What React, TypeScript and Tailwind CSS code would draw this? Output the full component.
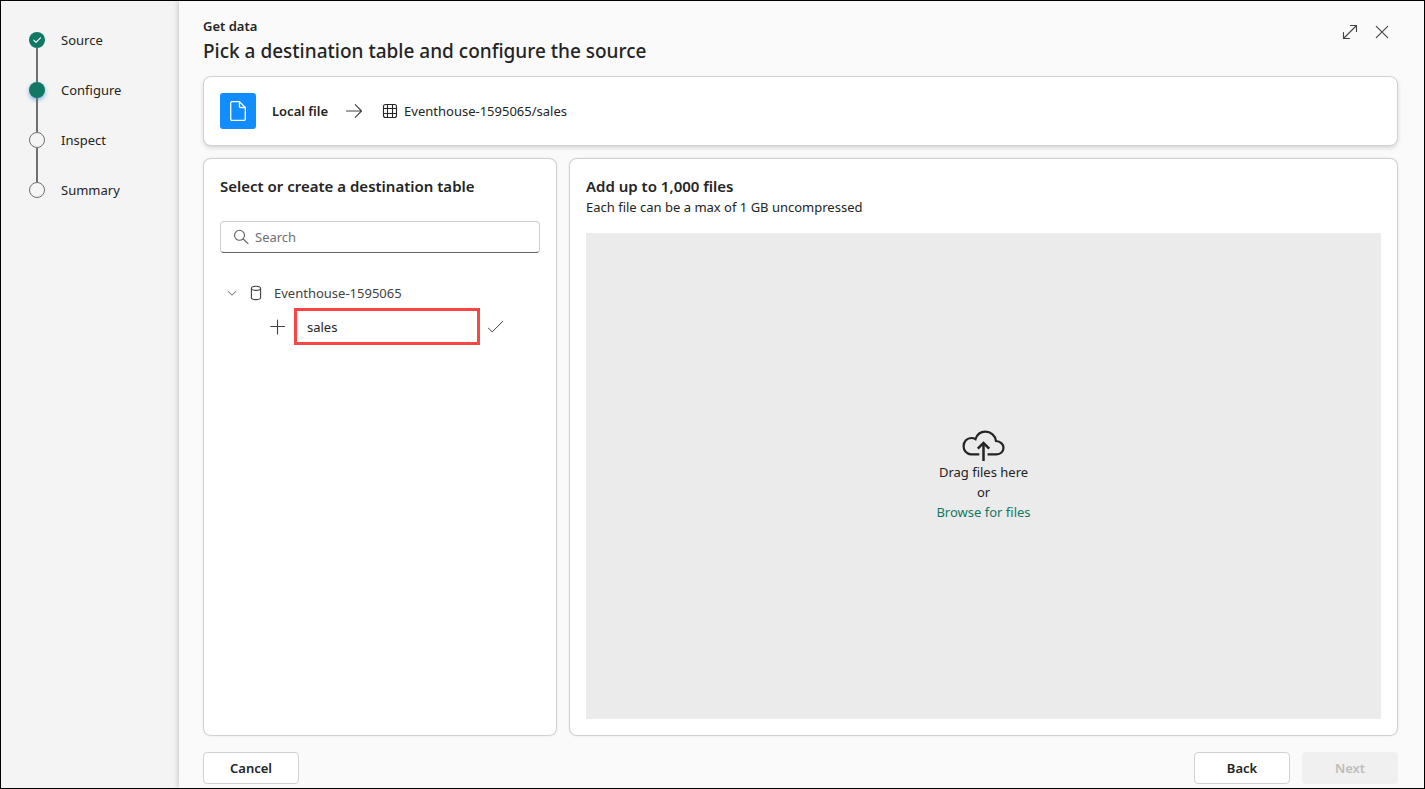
import React, { useState } from "react";

type StepState = "done" | "current" | "todo";

const steps: { label: string; state: StepState }[] = [
  { label: "Source", state: "done" },
  { label: "Configure", state: "current" },
  { label: "Inspect", state: "todo" },
  { label: "Summary", state: "todo" },
];

function StepMarker({ state }: { state: StepState }) {
  if (state === "done") {
    return (
      <span className="flex size-4 items-center justify-center rounded-full bg-[#117865]">
        <svg viewBox="0 0 16 16" className="size-4" fill="none" stroke="#fff" strokeWidth="1.1" strokeLinecap="round" strokeLinejoin="round" aria-hidden="true">
          <path d="M4.7 8.2 7 10.4 11.5 5.8" />
        </svg>
      </span>
    );
  }
  if (state === "current") {
    return <span className="size-4 rounded-full bg-[#117865] shadow-[0_2px_4px_#0078d480]" />;
  }
  return <span className="size-4 rounded-full border border-[#707070] bg-[#f5f5f5]" />;
}

function Stepper() {
  return (
    <nav aria-label="Steps" className="w-[178px] shrink-0 bg-[#f4f4f4] pl-7 pt-[31px]">
      <ol>
        {steps.map((step, i) => (
          <li key={step.label} className="flex gap-4">
            <div className="flex w-4 flex-col items-center">
              <StepMarker state={step.state} />
              {i < steps.length - 1 && <span className="h-[34px] w-[2px] bg-[#707070]" />}
            </div>
            <span className="h-4 leading-4">{step.label}</span>
          </li>
        ))}
      </ol>
    </nav>
  );
}

function SourceSummary({ table }: { table: string }) {
  return (
    <section className="flex h-[70px] shrink-0 items-center rounded-lg border border-[#d1d1d1] bg-white px-4 shadow-[0_2px_4px_#00000024]">
      <span className="flex size-9 items-center justify-center rounded-[3px] bg-[#118dff]">
        <svg viewBox="0 0 20 24" className="h-6 w-5" fill="none" stroke="#fff" strokeWidth="1.3" strokeLinejoin="round" aria-hidden="true">
          <path d="M3.7 2.6H11.4L17.3 8.5V20a1.4 1.4 0 0 1-1.4 1.4H4.1A1.4 1.4 0 0 1 2.7 20V3.9a1.3 1.3 0 0 1 1.3-1.3Z" />
          <path d="M11.4 2.6V7.2a1.3 1.3 0 0 0 1.3 1.3h4.6" />
        </svg>
      </span>
      <span className="ml-4 font-semibold">Local file</span>
      <svg viewBox="0 0 20 20" className="ml-4 size-5" fill="none" stroke="#424242" strokeWidth="1.1" strokeLinecap="round" strokeLinejoin="round" aria-hidden="true">
        <path d="M2.5 10H17.4M11.3 3.6 17.5 10 11.3 16.4" />
      </svg>
      <svg viewBox="0 0 16 16" className="ml-[18px] size-4" fill="none" stroke="#242424" strokeWidth="1.1" aria-hidden="true">
        <rect x="1.5" y="1.5" width="13" height="13" rx="2" />
        <path d="M1.5 5.5H14.5M1.5 10.5H14.5M5.5 1.5V14.5M10.5 1.5V14.5" />
      </svg>
      <span className="ml-[6px]">Eventhouse-1595065/{table}</span>
    </section>
  );
}

function DestinationPanel({ table, onTable }: { table: string; onTable: (v: string) => void }) {
  return (
    <section className="w-[354px] shrink-0 rounded-lg border border-[#d1d1d1] bg-white p-4 shadow-[0_0_2px_#0000001f]">
      <h2 className="text-[15px] font-semibold leading-[22px]">Select or create a destination table</h2>
      <label className="mt-6 flex h-8 items-center gap-[6px] rounded border border-[#d1d1d1] border-b-[#616161] px-3">
        <svg viewBox="0 0 16 16" className="size-4" fill="none" stroke="#616161" strokeWidth="1.1" strokeLinecap="round" aria-hidden="true">
          <circle cx="6.5" cy="6.3" r="5" />
          <path d="M10.2 10 15 14.7" />
        </svg>
        <input type="search" aria-label="Search" placeholder="Search" className="min-w-0 flex-1 bg-transparent outline-none placeholder:text-[#707070]" />
      </label>
      <div className="mt-6">
        <div className="flex h-[31px] items-center text-[#424242]">
          <button type="button" aria-label="Collapse Eventhouse-1595065" aria-expanded="true" className="flex size-6 items-center justify-center">
            <svg viewBox="0 0 12 12" className="size-3" fill="none" stroke="#616161" strokeWidth="1" strokeLinecap="round" strokeLinejoin="round">
              <path d="M2 4.3 6 8.2 10 4.3" />
            </svg>
          </button>
          <svg viewBox="0 0 16 16" className="ml-1 size-4" fill="none" stroke="#424242" strokeWidth="1.1" aria-hidden="true">
            <ellipse cx="8" cy="3.3" rx="4.6" ry="2.1" />
            <path d="M3.4 3.3V12.4C3.4 13.7 5.4 14.6 8 14.6s4.6-.9 4.6-2.2V3.3" />
          </svg>
          <span className="ml-[10px]">Eventhouse-1595065</span>
        </div>
        <div className="flex items-center gap-2 pl-[50px]">
          <svg viewBox="0 0 16 16" className="size-4" fill="none" stroke="#424242" strokeWidth="1.1" strokeLinecap="round" aria-hidden="true">
            <path d="M7.5 1V15M.7 7.5H14.5" />
          </svg>
          <input
            type="text"
            aria-label="New table name"
            value={table}
            onChange={(e) => onTable(e.target.value)}
            className="h-[37px] w-[186px] border-[3px] border-[#fb4545] bg-white px-[10px] outline-none"
          />
          <button type="button" aria-label="Create table" className="flex size-4 items-center justify-center">
            <svg viewBox="0 0 16 16" className="size-4" fill="none" stroke="#424242" strokeWidth="1" strokeLinecap="round" strokeLinejoin="round">
              <path d="M.1 8.8 4.2 12.9 14.6 2.5" />
            </svg>
          </button>
        </div>
      </div>
    </section>
  );
}

function UploadPanel() {
  return (
    <section className="flex min-w-0 flex-1 flex-col rounded-lg border border-[#d1d1d1] bg-white p-4 shadow-[0_0_2px_#0000001f]">
      <h2 className="text-[15px] font-semibold leading-[22px]">Add up to 1,000 files</h2>
      <p>Each file can be a max of 1 GB uncompressed</p>
      <div className="mt-4 flex flex-1 flex-col items-center justify-center bg-[#ebebeb]">
        <svg viewBox="0 0 44 32" className="h-8 w-11" fill="none" stroke="#242424" strokeWidth="2.2" aria-hidden="true">
          <path d="M17.3 24.3H8.8A7.9 7.9 0 0 1 1.6 16.3C1.6 11.5 5 8 9.3 8c1.6 0 3 .4 4.2 1.2C15.1 4.4 18.9 1.7 23.3 1.7c5.6 0 10.2 4.2 10.7 9.3 4.2.3 7.5 3.1 7.5 6.7 0 3.9-3.1 6.6-6.8 6.6H25.6" />
          <path d="M21.5 31V13" strokeWidth="2.5" />
          <path d="M15.8 18.6 21.5 12.9 27.2 18.6" strokeWidth="2.5" />
        </svg>
        <p>Drag files here</p>
        <p>or</p>
        <a href="#browse" className="text-[#117865]">Browse for files</a>
      </div>
    </section>
  );
}

export default function App() {
  const [table, setTable] = useState("sales");
  return (
    <div className="flex min-h-screen border border-black bg-[#fafafa] font-['Noto_Sans','Open_Sans',sans-serif] text-[13px] leading-5 text-[#242424]">
      <Stepper />
      <main className="flex min-w-0 flex-1 flex-col pb-1 pl-6 pr-[26px] pt-[15px] shadow-[0_0_6px_#00000040]">
        <header className="mb-[10px] flex items-start justify-between">
          <div>
            <p className="font-semibold">Get data</p>
            <h1 className="text-[19px] font-medium leading-[30px]">Pick a destination table and configure the source</h1>
          </div>
          <div className="flex">
            <button type="button" aria-label="Expand" className="flex size-8 items-center justify-center">
              <svg viewBox="0 0 16 16" className="size-4" fill="none" stroke="#424242" strokeWidth="1.1" strokeLinecap="round" strokeLinejoin="round">
                <path d="M1.5 14.5 14.5 1.5M8.5 1.5H14.5V7.5M1.5 8.5V14.5H7.5" />
              </svg>
            </button>
            <button type="button" aria-label="Close" className="flex size-8 items-center justify-center">
              <svg viewBox="0 0 16 16" className="size-4" fill="none" stroke="#424242" strokeWidth="1.1" strokeLinecap="round">
                <path d="M2.3 2.3 13.7 13.7M13.7 2.3 2.3 13.7" />
              </svg>
            </button>
          </div>
        </header>
        <SourceSummary table={table} />
        <div className="mt-3 flex flex-1 gap-3">
          <DestinationPanel table={table} onTable={setTable} />
          <UploadPanel />
        </div>
        <footer className="mt-4 flex gap-3 font-semibold">
          <button type="button" className="mr-auto h-8 w-24 rounded border border-[#d1d1d1] bg-white">Cancel</button>
          <button type="button" className="h-8 w-24 rounded border border-[#d1d1d1] bg-white">Back</button>
          <button type="button" disabled className="h-8 w-24 rounded bg-[#f0f0f0] text-[#bdbdbd]">Next</button>
        </footer>
      </main>
    </div>
  );
}
